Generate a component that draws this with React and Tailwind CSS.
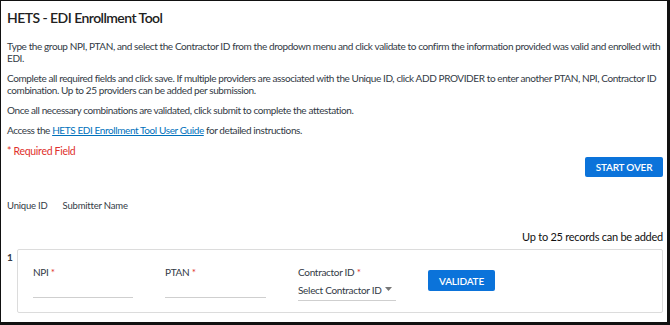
export default function App() {
  return (
    <div className="w-[670px] h-[325px] bg-white">
      <div className="h-full border-l border-t border-r-[3px] border-b-[3px] border-[#111] pl-[6px] pr-[4px] font-['Lato',sans-serif] text-[#323a45]">
        <h1 className="pt-[7px] text-[14px] leading-[20px] font-semibold tracking-[-0.55px] text-[#212121]">HETS - EDI Enrollment Tool</h1>
        <div className="mt-[12px] text-[10px] leading-[12px] tracking-[-0.4px] space-y-[8px]">
          <p>
            Type the group NPI, PTAN, and select the Contractor ID from the dropdown menu and click validate to confirm the information provided was valid and enrolled with EDI.
          </p>
          <p>
            Complete all required fields and click save. If multiple providers are associated with the Unique ID, click ADD PROVIDER to enter another PTAN, NPI, Contractor ID combination. Up to 25 providers can be added per submission.
          </p>
          <p>Once all necessary combinations are validated, click submit to complete the attestation.</p>
          <p>
            Access the <a className="text-[#0071bc] underline">HETS EDI Enrollment Tool User Guide</a> for detailed instructions.
          </p>
        </div>
        <p className="mt-[9px] text-[10.5px] leading-[12px] tracking-[-0.3px] text-[#e0312b]">* Required Field</p>
        <div className="flex justify-end">
          <button className="h-[20px] w-[78px] rounded-[2px] bg-[#0b73da] text-white text-[10px] font-semibold tracking-[-0.2px]">
            START OVER
          </button>
        </div>
        <div className="flex mt-[23px] text-[9.5px] leading-[12px] tracking-[-0.2px] gap-[15px]">
          <span>Unique ID</span>
          <span>Submitter Name</span>
        </div>
        <div className="flex justify-end mt-[18px] text-[11px] leading-[14px] tracking-[-0.25px] text-[#111]">Up to 25 records can be added</div>
        <div className="flex mt-[5px]">
          <span className="w-[10px] pt-[1px] text-[10px] font-bold">1</span>
          <div className="flex-1 h-[64px] border border-[#dcdcdc] rounded-[2px] flex items-start pl-[15px] pt-[16px] text-[10px] leading-[12px] tracking-[-0.3px]">
            <div className="w-[100px]">
              <div>NPI <span className="text-[#e0312b]">*</span></div>
              <div className="mt-[19px] border-b border-[#cfcfcf]"></div>
            </div>
            <div className="w-[101px] ml-[32px]">
              <div>PTAN <span className="text-[#e0312b]">*</span></div>
              <div className="mt-[19px] border-b border-[#cfcfcf]"></div>
            </div>
            <div className="w-[98px] ml-[32px]">
              <div>Contractor ID <span className="text-[#e0312b]">*</span></div>
              <div className="mt-[6px] pb-[4px] border-b border-[#cfcfcf] flex items-center whitespace-nowrap">
                Select Contractor ID
                <svg width="7" height="4" viewBox="0 0 7 4" className="ml-[3px] mt-[-2px]">
                  <path d="M0 0h7L3.5 4z" fill="#777" />
                </svg>
              </div>
            </div>
            <button className="ml-[32px] mt-[4px] h-[21px] w-[67px] rounded-[2px] bg-[#0b73da] text-white text-[10px] font-semibold tracking-[-0.2px]">
              VALIDATE
            </button>
          </div>
        </div>
      </div>
    </div>
  );
}
